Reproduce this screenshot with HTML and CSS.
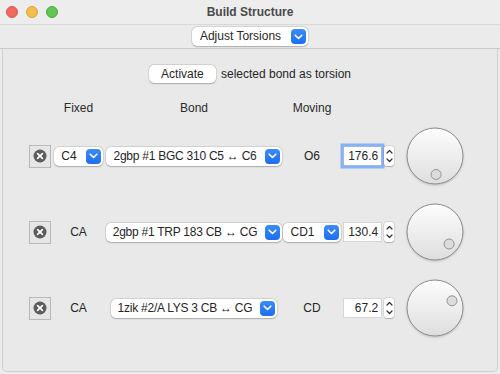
FILE: index.html
```html
<!DOCTYPE html>
<html>
<head>
<meta charset="utf-8">
<link rel="stylesheet" href="styles.css">
</head>
<body>
<div class="window">
  <div class="titlebar">
    <div class="lights">
      <span class="light red"></span>
      <span class="light yellow"></span>
      <span class="light green"></span>
    </div>
    <div class="title">Build Structure</div>
    <div class="lights-spacer"></div>
  </div>
  <div class="toolbar">
    <div class="popup">
      <span class="popup-label">Adjust Torsions</span>
      <span class="chev"><svg width="9" height="6" viewBox="0 0 9 6"><path d="M1.2 1.2 L4.5 4.5 L7.8 1.2" fill="none" stroke="#fff" stroke-width="1.6" stroke-linecap="round" stroke-linejoin="round"/></svg></span>
    </div>
  </div>
  <div class="panel">
    <div class="activate-row">
      <div class="btn">Activate</div>
      <span class="act-text">selected bond as torsion</span>
    </div>
    <div class="grid">
      <div class="cell"></div>
      <div class="cell head">Fixed</div>
      <div class="cell head">Bond</div>
      <div class="cell head">Moving</div>
      <div class="cell"></div>
      <div class="cell"></div>

      <!-- row 1 -->
      <div class="cell row"><div class="xbtn"><svg width="14" height="14" viewBox="0 0 14 14"><circle cx="7" cy="7" r="6.5" fill="#5b5b5b"/><path d="M4.6 4.6 L9.4 9.4 M9.4 4.6 L4.6 9.4" stroke="#fff" stroke-width="1.7" stroke-linecap="round"/></svg></div></div>
      <div class="cell row"><div class="popup small"><span class="popup-label">C4</span><span class="chev"><svg width="9" height="6" viewBox="0 0 9 6"><path d="M1.2 1.2 L4.5 4.5 L7.8 1.2" fill="none" stroke="#fff" stroke-width="1.6" stroke-linecap="round" stroke-linejoin="round"/></svg></span></div></div>
      <div class="cell row"><div class="popup bond"><span class="popup-label">2gbp #1 BGC 310 C5 ↔ C6</span><span class="chev"><svg width="9" height="6" viewBox="0 0 9 6"><path d="M1.2 1.2 L4.5 4.5 L7.8 1.2" fill="none" stroke="#fff" stroke-width="1.6" stroke-linecap="round" stroke-linejoin="round"/></svg></span></div></div>
      <div class="cell row">O6</div>
      <div class="cell row field-cell"><div class="field focus">176.6</div><div class="stepper"><svg width="9" height="20" viewBox="0 0 9 20"><path d="M2 7 L4.5 4.5 L7 7 M2 13 L4.5 15.5 L7 13" fill="none" stroke="#333" stroke-width="1.2" stroke-linecap="round" stroke-linejoin="round"/></svg></div></div>
      <div class="cell row"><svg class="knob" width="60" height="60" viewBox="0 0 60 60"><defs><linearGradient id="kg1" x1="0" y1="0" x2="0" y2="1"><stop offset="0" stop-color="#fdfdfd"/><stop offset="1" stop-color="#dedede"/></linearGradient></defs><circle cx="30" cy="30" r="28" fill="url(#kg1)" stroke="#8c8c8c" stroke-width="1"/><circle cx="31.1" cy="48.5" r="5" fill="#dcdcdc" stroke="#939393" stroke-width="1"/></svg></div>

      <!-- row 2 -->
      <div class="cell row"><div class="xbtn"><svg width="14" height="14" viewBox="0 0 14 14"><circle cx="7" cy="7" r="6.5" fill="#5b5b5b"/><path d="M4.6 4.6 L9.4 9.4 M9.4 4.6 L4.6 9.4" stroke="#fff" stroke-width="1.7" stroke-linecap="round"/></svg></div></div>
      <div class="cell row">CA</div>
      <div class="cell row"><div class="popup bond"><span class="popup-label">2gbp #1 TRP 183 CB ↔ CG</span><span class="chev"><svg width="9" height="6" viewBox="0 0 9 6"><path d="M1.2 1.2 L4.5 4.5 L7.8 1.2" fill="none" stroke="#fff" stroke-width="1.6" stroke-linecap="round" stroke-linejoin="round"/></svg></span></div></div>
      <div class="cell row"><div class="popup small"><span class="popup-label">CD1</span><span class="chev"><svg width="9" height="6" viewBox="0 0 9 6"><path d="M1.2 1.2 L4.5 4.5 L7.8 1.2" fill="none" stroke="#fff" stroke-width="1.6" stroke-linecap="round" stroke-linejoin="round"/></svg></span></div></div>
      <div class="cell row field-cell"><div class="field">130.4</div><div class="stepper"><svg width="9" height="20" viewBox="0 0 9 20"><path d="M2 7 L4.5 4.5 L7 7 M2 13 L4.5 15.5 L7 13" fill="none" stroke="#333" stroke-width="1.2" stroke-linecap="round" stroke-linejoin="round"/></svg></div></div>
      <div class="cell row"><svg class="knob" width="60" height="60" viewBox="0 0 60 60"><defs><linearGradient id="kg2" x1="0" y1="0" x2="0" y2="1"><stop offset="0" stop-color="#fdfdfd"/><stop offset="1" stop-color="#dedede"/></linearGradient></defs><circle cx="30" cy="30" r="28" fill="url(#kg2)" stroke="#8c8c8c" stroke-width="1"/><circle cx="44.1" cy="42" r="5" fill="#dcdcdc" stroke="#939393" stroke-width="1"/></svg></div>

      <!-- row 3 -->
      <div class="cell row"><div class="xbtn"><svg width="14" height="14" viewBox="0 0 14 14"><circle cx="7" cy="7" r="6.5" fill="#5b5b5b"/><path d="M4.6 4.6 L9.4 9.4 M9.4 4.6 L4.6 9.4" stroke="#fff" stroke-width="1.7" stroke-linecap="round"/></svg></div></div>
      <div class="cell row">CA</div>
      <div class="cell row"><div class="popup bond"><span class="popup-label">1zik #2/A LYS 3 CB ↔ CG</span><span class="chev"><svg width="9" height="6" viewBox="0 0 9 6"><path d="M1.2 1.2 L4.5 4.5 L7.8 1.2" fill="none" stroke="#fff" stroke-width="1.6" stroke-linecap="round" stroke-linejoin="round"/></svg></span></div></div>
      <div class="cell row">CD</div>
      <div class="cell row field-cell"><div class="field">67.2</div><div class="stepper"><svg width="9" height="20" viewBox="0 0 9 20"><path d="M2 7 L4.5 4.5 L7 7 M2 13 L4.5 15.5 L7 13" fill="none" stroke="#333" stroke-width="1.2" stroke-linecap="round" stroke-linejoin="round"/></svg></div></div>
      <div class="cell row"><svg class="knob" width="60" height="60" viewBox="0 0 60 60"><defs><linearGradient id="kg3" x1="0" y1="0" x2="0" y2="1"><stop offset="0" stop-color="#fdfdfd"/><stop offset="1" stop-color="#dedede"/></linearGradient></defs><circle cx="30" cy="30" r="28" fill="url(#kg3)" stroke="#8c8c8c" stroke-width="1"/><circle cx="47" cy="22.8" r="5" fill="#dcdcdc" stroke="#939393" stroke-width="1"/></svg></div>
    </div>
  </div>
</div>
</body>
</html>
```

FILE: styles.css
```css
* { box-sizing: border-box; }
html, body {
  margin: 0;
  padding: 0;
}
body {
  width: 500px;
  height: 374px;
  background: #ececec;
  font-family: "Liberation Sans", Arial, sans-serif;
  font-size: 12px;
  color: #262626;
  overflow: hidden;
}
.window {
  width: 500px;
  height: 374px;
  display: flex;
  flex-direction: column;
  background: #ececec;
}
.titlebar {
  height: 25px;
  display: flex;
  align-items: center;
  border-bottom: 1px solid #d9d9d9;
  background: #ededed;
}
.lights, .lights-spacer {
  width: 70px;
  display: flex;
  gap: 8px;
  padding-left: 6px;
  align-items: center;
}
.light {
  width: 12px;
  height: 12px;
  border-radius: 50%;
  display: block;
}
.red { background: #ee6a5f; border: 0.5px solid #d9574d; }
.yellow { background: #f5bd4f; border: 0.5px solid #d9a23a; }
.green { background: #61c454; border: 0.5px solid #4fa83f; }
.title {
  flex: 1;
  text-align: center;
  font-weight: 700;
  font-size: 12px;
  color: #4a4a4a;
}
.toolbar {
  height: 24px;
  display: flex;
  justify-content: center;
  align-items: center;
  background: #ebebeb;
  border-bottom: 1px solid #c9c9c9;
}
.popup {
  display: inline-flex;
  flex-shrink: 0;
  align-items: center;
  height: 19px;
  background: #fff;
  border-radius: 5px;
  box-shadow: 0 0 0 0.5px rgba(0,0,0,0.12), 0 0.5px 1.5px rgba(0,0,0,0.22);
  padding: 0 2px 0 8px;
  gap: 10px;
  white-space: nowrap;
  line-height: 19px;
}
.popup.bond {
  letter-spacing: -0.25px;
  padding-left: 7px;
  gap: 8px;
}
.chev {
  flex-shrink: 0;
  width: 15px;
  height: 15px;
  border-radius: 4px;
  background: linear-gradient(#3b8cf8, #1d6ef0);
  display: flex;
  align-items: center;
  justify-content: center;
}
.panel {
  flex: 1;
  margin: 0 2px 2px 2px;
  border: 1px solid #cfcfcf;
  border-top: none;
  border-radius: 0 0 5px 5px;
  background: #e9e9e9;
  padding-top: 15px;
}
.activate-row {
  display: flex;
  justify-content: center;
  align-items: center;
  gap: 5px;
  height: 19px;
}
.btn {
  width: 67px;
  height: 18px;
  line-height: 18px;
  text-align: center;
  background: #fff;
  border-radius: 5px;
  box-shadow: 0 0 0 0.5px rgba(0,0,0,0.12), 0 0.5px 1.5px rgba(0,0,0,0.22);
}
.grid {
  display: grid;
  grid-template-columns: 22px 55px 176px 60px 52px 82px;
  grid-template-rows: 20px 76px 76px 76px;
  margin-left: 26px;
  margin-top: 15px;
}
.cell {
  display: flex;
  align-items: center;
  justify-content: center;
  white-space: nowrap;
}
.head { color: #2b2b2b; }
.xbtn {
  width: 22px;
  height: 23px;
  border: 1px solid #b8b8b8;
  background: #e6e6e6;
  display: flex;
  align-items: center;
  justify-content: center;
}
.popup.small { gap: 9px; padding-left: 7px; }
.field-cell {
  justify-content: flex-start;
  padding-left: 1px;
  gap: 2px;
}
.field {
  width: 40px;
  height: 20px;
  background: #fff;
  border: 1px solid #d6d6d6;
  text-align: right;
  padding-right: 3px;
  line-height: 18px;
}
.field.focus {
  border: 1px solid #9fb9e0;
  box-shadow: 0 0 0 2.5px #86b3f3;
}
.stepper {
  width: 10px;
  height: 20px;
  background: #fff;
  border-radius: 3px;
  box-shadow: 0 0 0 0.5px rgba(0,0,0,0.12), 0 0.5px 1px rgba(0,0,0,0.2);
  display: flex;
  align-items: center;
  justify-content: center;
}
.knob {
  display: block;
  filter: drop-shadow(0 1px 1px rgba(0,0,0,0.18));
}
```
